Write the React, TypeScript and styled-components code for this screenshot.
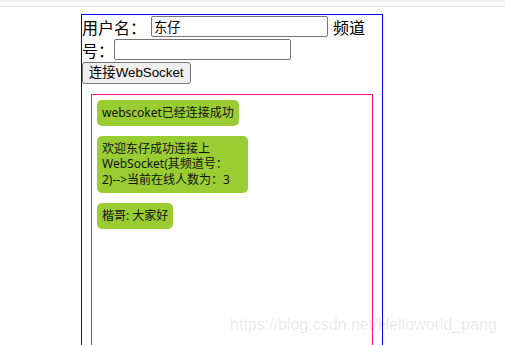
import React from "react";
import styled, { createGlobalStyle } from "styled-components";

const Global = createGlobalStyle`
  html, body { margin: 0; padding: 0; background: #fff; overflow: hidden; }
  body { width: 505px; height: 345px; position: relative; font-family: "Noto Sans", "Noto Sans CJK SC", sans-serif; color: #000; }
`;

const BrowserEdge = styled.div`
  height: 7px;
  box-sizing: border-box;
  border-top: 2px solid #f1f1f1;
  border-bottom: 1px solid #dcdcdc;
`;

const Panel = styled.div`
  margin: 7px 0 0 81px;
  width: 302px;
  height: 400px;
  box-sizing: border-box;
  border: 1px solid #0000ff;
  display: flex;
  flex-direction: column;
`;

const FormRow = styled.div`
  display: flex;
  align-items: center;
  height: 23px;
  font-size: 16px;
  line-height: 18px;
  font-family: "Noto Sans CJK SC", sans-serif;
`;

const Label = styled.span<{ $before?: number; $after?: number }>`
  margin-left: ${(p) => p.$before ?? 0}px;
  margin-right: ${(p) => p.$after ?? 0}px;
  white-space: nowrap;
`;

const TextInput = styled.input`
  box-sizing: border-box;
  width: 177px;
  height: 21px;
  border: 1px solid #767676;
  border-radius: 2px;
  padding: 1px 2px;
  font-size: 13.33px;
  font-family: "Noto Sans CJK SC", sans-serif;
  color: #000;
  background: #fff;
  outline: none;
`;

const ButtonRow = styled.div`
  display: flex;
  padding-top: 1px;
`;

const ConnectButton = styled.button`
  box-sizing: border-box;
  height: 22px;
  padding: 0 6px;
  background: #efefef;
  border: 1px solid #767676;
  border-radius: 3px;
  font-size: 13.33px;
  font-family: "Liberation Sans", "Noto Sans CJK SC", sans-serif;
  color: #000;
  line-height: 18px;
`;

const MessageBox = styled.div`
  margin: 10px 9px 0 9px;
  flex: 1;
  border: 1px solid #ff1493;
  padding: 5px;
  display: flex;
  flex-direction: column;
  align-items: flex-start;
  gap: 10px;
`;

const Bubble = styled.div<{ $multiline?: boolean }>`
  background: #9acd32;
  border-radius: 5px;
  padding: 5px;
  max-width: 141px;
  width: ${(p) => (p.$multiline ? "141px" : "auto")};
  font-size: 12px;
  line-height: 15.7px;
  font-family: "Noto Sans", "Noto Sans CJK SC", sans-serif;
  white-space: pre-line;
  color: #111;
`;

const Watermark = styled.div`
  position: absolute;
  left: 230px;
  top: 316px;
  font-family: "Liberation Sans", sans-serif;
  font-size: 16px;
  color: rgba(0, 0, 0, 0.1);
  pointer-events: none;
`;

const messages = [
  "webscoket已经连接成功",
  "欢迎东仔成功连接上\nWebSocket(其频道号：\n2)-->当前在线人数为：3",
  "楷哥: 大家好",
];

export default function App() {
  return (
    <>
      <Global />
      <BrowserEdge />
      <Panel>
        <FormRow>
          <Label $after={5}>用户名：</Label>
          <TextInput defaultValue="东仔" />
          <Label $before={5}>频道</Label>
        </FormRow>
        <FormRow>
          <Label>号：</Label>
          <TextInput />
        </FormRow>
        <ButtonRow>
          <ConnectButton>连接WebSocket</ConnectButton>
        </ButtonRow>
        <MessageBox>
          {messages.map((m, i) => (
            <Bubble key={i} $multiline={m.includes("\n")}>
              {m}
            </Bubble>
          ))}
        </MessageBox>
      </Panel>
      <Watermark>https://blog.csdn.net/Helloworld_pang</Watermark>
    </>
  );
}
